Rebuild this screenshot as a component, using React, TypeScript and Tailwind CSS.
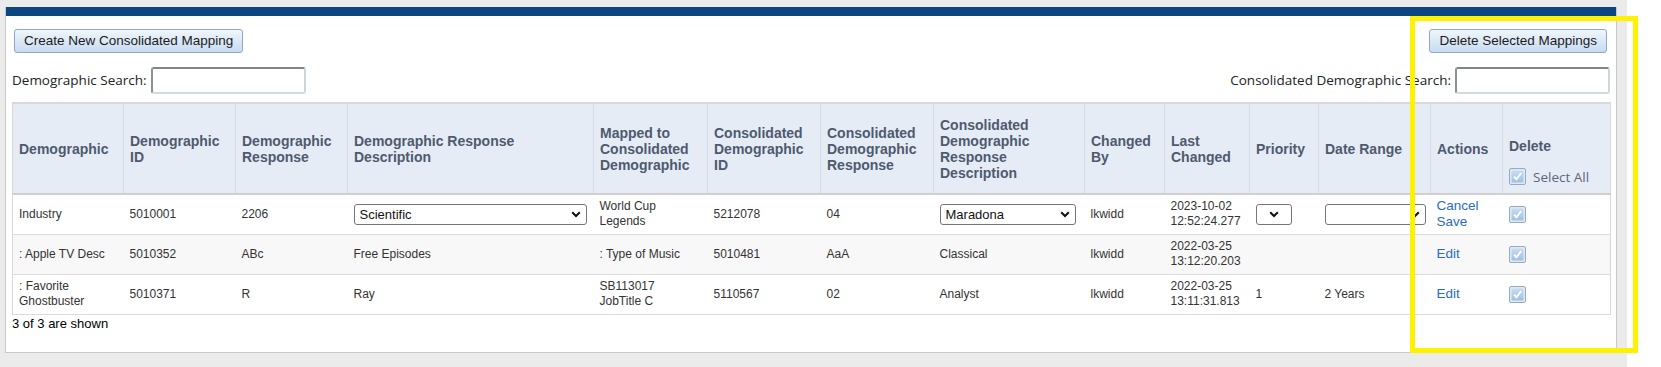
import { ReactNode } from 'react'

const arial = "font-['Liberation_Sans',Arial,sans-serif]"
const sans = "font-['Open_Sans','Noto_Sans',sans-serif]"

const widths = [111, 112, 112, 246, 114, 113, 113, 151, 80, 85, 69, 112, 72, 108]

function Chevron() {
  return (
    <svg width="10" height="7" viewBox="0 0 10 7" className="shrink-0">
      <path d="M1.2 1.2 L5 5 L8.8 1.2" stroke="#111" strokeWidth="2" fill="none" />
    </svg>
  )
}

function FakeSelect({ value, w, align = 'justify-between' }: { value?: string; w: string; align?: string }) {
  return (
    <div
      className={`${w} ${align} flex h-[21px] items-center rounded-[3px] border border-[#767676] bg-white px-[5px] text-[13px] text-[#111]`}
    >
      {value && <span>{value}</span>}
      <Chevron />
    </div>
  )
}

function CheckBox() {
  return (
    <svg width="17" height="17" viewBox="0 0 17 17" className="block">
      <defs>
        <linearGradient id="cbg" x1="0" y1="0" x2="0" y2="1">
          <stop offset="0" stopColor="#c8ddf2" />
          <stop offset="1" stopColor="#9fc0e3" />
        </linearGradient>
      </defs>
      <rect x="0.5" y="0.5" width="16" height="16" rx="1.5" fill="#e0e9f3" stroke="#97abc0" />
      <rect x="2.5" y="2.5" width="12" height="12" rx="1" fill="url(#cbg)" />
      <path d="M5 8.6 L7.4 11.3 L12.2 5" stroke="#ffffff" strokeWidth="1.9" fill="none" />
    </svg>
  )
}

function Button({ children, className = '' }: { children: ReactNode; className?: string }) {
  return (
    <button
      className={`${arial} h-[24px] rounded-[3px] border border-[#8ea8c8] bg-linear-to-b from-[#f0f6fc] to-[#c8dbf1] px-[9px] text-[13.5px] text-[#1b1b1b] ${className}`}
    >
      {children}
    </button>
  )
}

function SearchBox({ label }: { label: string }) {
  return (
    <label className={`${sans} flex items-center gap-[4px] text-[13.5px] text-[#222]`}>
      {label}
      <input className="h-[27px] w-[155px] rounded-[3px] border-2 border-t-[#7f858c] border-l-[#8a9096] border-r-[#cdd5dd] border-b-[#d3dae2] bg-white outline-none" />
    </label>
  )
}

type Row = {
  cells: ReactNode[]
  shade?: boolean
}

const Link = ({ children }: { children: ReactNode }) => (
  <div className="text-[13.5px] leading-[16px] text-[#2b6cbf]">{children}</div>
)

const rows: Row[] = [
  {
    cells: [
      'Industry',
      '5010001',
      '2206',
      <FakeSelect value="Scientific" w="w-[233px]" />,
      <>World Cup<br />Legends</>,
      '5212078',
      '04',
      <FakeSelect value="Maradona" w="w-[136px]" />,
      'lkwidd',
      <>2023-10-02<br />12:52:24.277</>,
      <FakeSelect w="w-[36px]" align="justify-center" />,
      <FakeSelect w="w-[101px]" align="justify-end" />,
      <Link>Cancel<br />Save</Link>,
      <CheckBox />,
    ],
  },
  {
    shade: true,
    cells: [
      ': Apple TV Desc',
      '5010352',
      'ABc',
      'Free Episodes',
      ': Type of Music',
      '5010481',
      'AaA',
      'Classical',
      'lkwidd',
      <>2022-03-25<br />13:12:20.203</>,
      '',
      '',
      <Link>Edit</Link>,
      <CheckBox />,
    ],
  },
  {
    cells: [
      <>: Favorite<br />Ghostbuster</>,
      '5010371',
      'R',
      'Ray',
      <>SB113017<br />JobTitle C</>,
      '5110567',
      '02',
      'Analyst',
      'lkwidd',
      <>2022-03-25<br />13:11:31.813</>,
      '1',
      '2 Years',
      <Link>Edit</Link>,
      <CheckBox />,
    ],
  },
]

const headers: ReactNode[] = [
  'Demographic',
  <>Demographic<br />ID</>,
  <>Demographic<br />Response</>,
  <>Demographic Response<br />Description</>,
  <>Mapped to<br />Consolidated<br />Demographic</>,
  <>Consolidated<br />Demographic<br />ID</>,
  <>Consolidated<br />Demographic<br />Response</>,
  <>Consolidated<br />Demographic<br />Response<br />Description</>,
  <>Changed<br />By</>,
  <>Last<br />Changed</>,
  'Priority',
  'Date Range',
  'Actions',
]

export default function App() {
  return (
    <div className="relative flex h-[367px] w-full overflow-hidden bg-white">
      <div className="h-full w-[1627px] shrink-0 bg-[#ebebeb] pl-[5px] pt-[7px]">
        <div className="flex h-[346px] w-[1612px] flex-col border-x border-b border-[#c9c9c9] bg-white">
          <div className="h-[9px] bg-[#0b4680]" />
          <div className="px-[6px] pt-[13px]">
            <div className="flex justify-between">
              <Button className="ml-[2px]">Create New Consolidated Mapping</Button>
              <Button className="mr-[3px]">Delete Selected Mappings</Button>
            </div>
            <div className="mt-[14px] flex items-center justify-between">
              <SearchBox label="Demographic Search:" />
              <SearchBox label="Consolidated Demographic Search:" />
            </div>

            <table className={`${arial} mt-[8px] w-[1598px] table-fixed border-collapse border border-t-2 border-[#d9d9d9]`}>
              <colgroup>
                {widths.map((w, i) => (
                  <col key={i} style={{ width: w }} />
                ))}
              </colgroup>
              <thead>
                <tr className="h-[91px] border-b-2 border-[#cfcfcf] bg-[#e6ecf6]">
                  {headers.map((h, i) => (
                    <th
                      key={i}
                      className="border-r border-[#d7dde6] px-[6px] text-left align-middle text-[14px] font-bold leading-[16px] text-[#4e5a6e]"
                    >
                      {h}
                    </th>
                  ))}
                  <th className="px-[6px] pt-[34px] text-left align-top text-[14px] font-bold leading-[16px] text-[#4e5a6e]">
                    Delete
                    <div className={`${sans} mt-[14px] flex items-center gap-[7px] text-[13.5px] font-normal text-[#5d6679]`}>
                      <CheckBox />
                      Select All
                    </div>
                  </th>
                </tr>
              </thead>
              <tbody>
                {rows.map((r, ri) => (
                  <tr key={ri} className={`h-[40px] border-b border-[#dcdcdc] ${r.shade ? 'bg-[#f8f8f8]' : 'bg-white'}`}>
                    {r.cells.map((c, ci) => (
                      <td key={ci} className="px-[6px] align-middle text-[12px] leading-[15px] text-[#333]">
                        {c}
                      </td>
                    ))}
                  </tr>
                ))}
              </tbody>
            </table>
            <p className={`${arial} mt-[1px] text-[13px] leading-[15px] text-black`}>3 of 3 are shown</p>
          </div>
        </div>
      </div>

      {/* highlight box drawn over the page */}
      <div className="pointer-events-none absolute left-[1410px] top-[16px] h-[337px] w-[228px] border-[5px] border-[#fff200]" />
    </div>
  )
}
